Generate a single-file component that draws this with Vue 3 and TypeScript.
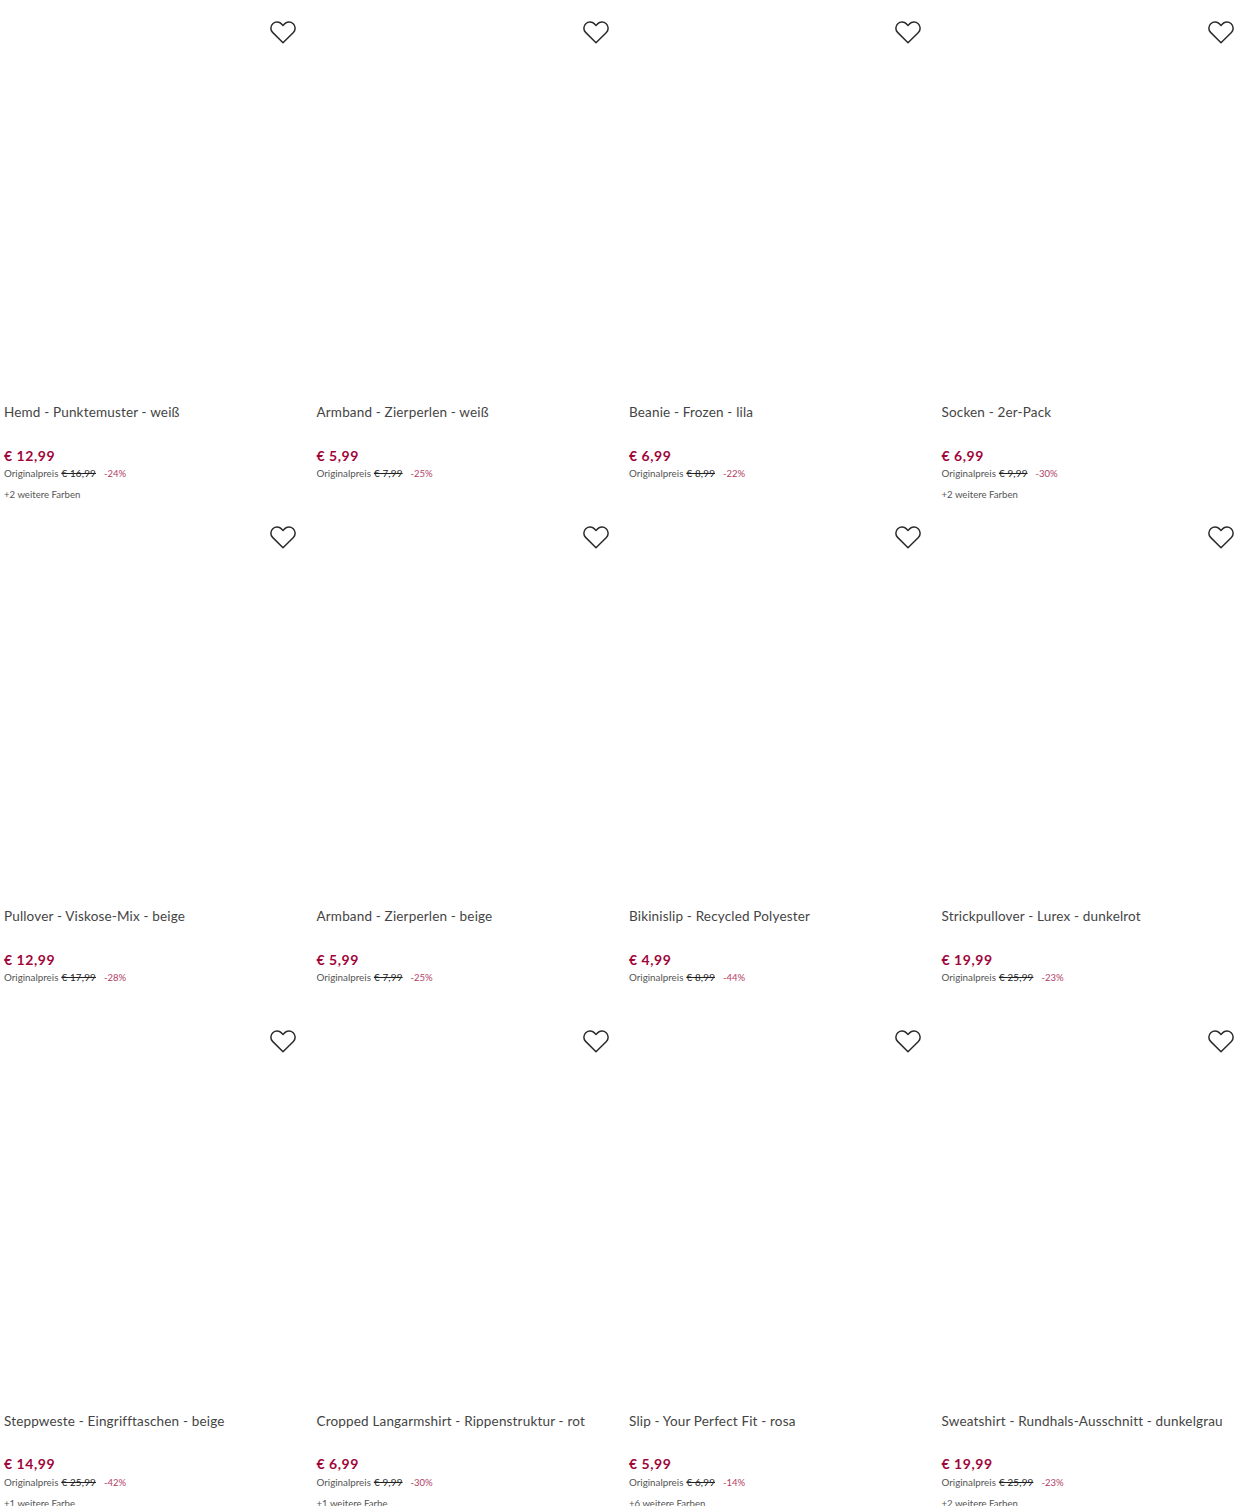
<script setup lang="ts">
interface Product { name: string; price: string; orig: string; off: string; more?: string }
const products: Product[] = [
  { name: 'Hemd - Punktemuster - weiß', price: '€ 12,99', orig: '€ 16,99', off: '-24%', more: '+2 weitere Farben' },
  { name: 'Armband - Zierperlen - weiß', price: '€ 5,99', orig: '€ 7,99', off: '-25%' },
  { name: 'Beanie - Frozen - lila', price: '€ 6,99', orig: '€ 8,99', off: '-22%' },
  { name: 'Socken - 2er-Pack', price: '€ 6,99', orig: '€ 9,99', off: '-30%', more: '+2 weitere Farben' },
  { name: 'Pullover - Viskose-Mix - beige', price: '€ 12,99', orig: '€ 17,99', off: '-28%' },
  { name: 'Armband - Zierperlen - beige', price: '€ 5,99', orig: '€ 7,99', off: '-25%' },
  { name: 'Bikinislip - Recycled Polyester', price: '€ 4,99', orig: '€ 8,99', off: '-44%' },
  { name: 'Strickpullover - Lurex - dunkelrot', price: '€ 19,99', orig: '€ 25,99', off: '-23%' },
  { name: 'Steppweste - Eingrifftaschen - beige', price: '€ 14,99', orig: '€ 25,99', off: '-42%', more: '+1 weitere Farbe' },
  { name: 'Cropped Langarmshirt - Rippenstruktur - rot', price: '€ 6,99', orig: '€ 9,99', off: '-30%', more: '+1 weitere Farbe' },
  { name: 'Slip - Your Perfect Fit - rosa', price: '€ 5,99', orig: '€ 6,99', off: '-14%', more: '+6 weitere Farben' },
  { name: 'Sweatshirt - Rundhals-Ausschnitt - dunkelgrau', price: '€ 19,99', orig: '€ 25,99', off: '-23%', more: '+2 weitere Farben' },
]
</script>

<template>
  <main class="grid">
    <article v-for="p in products" :key="p.name" class="card">
      <div class="image">
        <svg class="heart" width="26" height="23" viewBox="0 0 26 23" fill="none">
          <path d="M13 21.8 L2.6 11.4 C0.2 8.9 0.3 5 2.8 2.7 C5.3 0.4 9.1 0.5 11.5 2.9 L13 4.5 L14.5 2.9 C16.9 0.5 20.7 0.4 23.2 2.7 C25.7 5 25.8 8.9 23.4 11.4 Z" stroke="#2b2b2b" stroke-width="1.5" stroke-linejoin="round" />
        </svg>
      </div>
      <h2 class="name">{{ p.name }}</h2>
      <div class="price">{{ p.price }}</div>
      <div class="orig">
        <span>Originalpreis</span>
        <s class="old">{{ p.orig }}</s>
        <span class="off">{{ p.off }}</span>
      </div>
      <div v-if="p.more" class="more">{{ p.more }}</div>
    </article>
  </main>
</template>

<style>
html, body { margin: 0; background: #fff; overflow: hidden; }
</style>

<style scoped>
.grid {
  display: grid;
  grid-template-columns: repeat(4, 312.5px);
  grid-auto-rows: 504.3px;
  width: 1250px;
  height: 1506px;
  overflow: hidden;
  font-family: "Lato", "Liberation Sans", sans-serif;
  color: #444;
}
.card { padding-left: 4px; min-width: 0; }
.image {
  height: 402px;
  display: flex;
  justify-content: flex-end;
  padding: 21.3px 16.5px 0 0;
  box-sizing: border-box;
}
.heart { display: block; }
.name {
  margin: 0;
  font-size: 13.5px;
  font-weight: 400;
  line-height: 20px;
  letter-spacing: 0.17px;
  white-space: nowrap;
}
.price {
  margin-top: 23.5px;
  font-size: 14px;
  font-weight: 700;
  line-height: 20px;
  letter-spacing: 0.55px;
  color: #a0063a;
}
.orig {
  display: flex;
  align-items: baseline;
  margin-top: -0.5px;
  font-size: 9.8px;
  font-weight: 400;
  line-height: 16px;
  color: #555;
}
.old { margin-left: 3px; color: #222; letter-spacing: 0.2px; }
.off { margin-left: 8px; color: #a0063a; font-size: 9.5px; font-weight: 400; opacity: 0.8; }
.more {
  margin-top: 5.4px;
  font-size: 9.6px;
  font-weight: 400;
  line-height: 16px;
  color: #555;
}
</style>
